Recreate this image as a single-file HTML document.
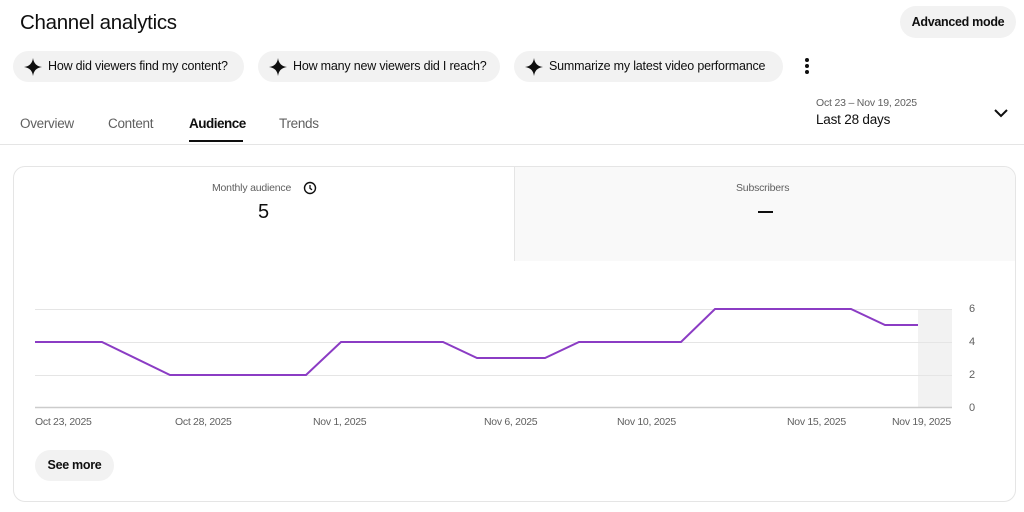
<!DOCTYPE html>
<html><head><style>
*{margin:0;padding:0;box-sizing:border-box}
body{width:1024px;height:512px;background:#fff;font-family:"Liberation Sans",sans-serif;color:#0f0f0f;position:relative;overflow:hidden}
.a{position:absolute;white-space:nowrap}
.chip{position:absolute;height:31px;top:51px;background:#f2f2f2;border-radius:16px;font-size:12.5px;letter-spacing:-0.2px;line-height:31px;padding-left:35px;white-space:nowrap}
.chip svg{position:absolute;left:11px;top:7px}
.tab{position:absolute;top:116px;font-size:13.5px;letter-spacing:-0.3px;color:#606060;white-space:nowrap}
.xl{position:absolute;top:416px;font-size:10.5px;letter-spacing:-0.3px;color:#606060;white-space:nowrap}
.yl{position:absolute;left:969px;font-size:11px;color:#606060}
</style></head><body>
<div class="a" style="left:20px;top:11px;font-size:20.5px;letter-spacing:-0.3px">Channel analytics</div>
<div class="a" style="left:900px;top:6px;width:116px;height:32px;background:#f2f2f2;border-radius:16px;font-size:12.5px;letter-spacing:-0.3px;line-height:32px;text-align:center;font-weight:bold">Advanced mode</div>

<div class="chip" style="left:13px;width:231px">How did viewers find my content?<svg width="18" height="18" viewBox="0 0 18 18"><path d="M9 0Q10 8 18 9Q10 10 9 18Q8 10 0 9Q8 8 9 0Z" fill="#0f0f0f"/></svg></div>
<div class="chip" style="left:258px;width:242px">How many new viewers did I reach?<svg width="18" height="18" viewBox="0 0 18 18"><path d="M9 0Q10 8 18 9Q10 10 9 18Q8 10 0 9Q8 8 9 0Z" fill="#0f0f0f"/></svg></div>
<div class="chip" style="left:514px;width:269px">Summarize my latest video performance<svg width="18" height="18" viewBox="0 0 18 18"><path d="M9 0Q10 8 18 9Q10 10 9 18Q8 10 0 9Q8 8 9 0Z" fill="#0f0f0f"/></svg></div>
<svg class="a" style="left:803px;top:57px" width="8" height="18"><circle cx="4" cy="3" r="2" fill="#0f0f0f"/><circle cx="4" cy="9" r="2" fill="#0f0f0f"/><circle cx="4" cy="15" r="2" fill="#0f0f0f"/></svg>

<div class="tab" style="left:20px">Overview</div>
<div class="tab" style="left:108px">Content</div>
<div class="tab" style="left:189px;color:#0f0f0f;font-weight:bold;letter-spacing:-0.5px">Audience</div>
<div class="a" style="left:189px;top:140px;width:54px;height:2px;background:#0f0f0f"></div>
<div class="tab" style="left:279px">Trends</div>
<div class="a" style="left:816px;top:97px;font-size:10.5px;letter-spacing:-0.2px;color:#606060">Oct 23 – Nov 19, 2025</div>
<div class="a" style="left:816px;top:112px;font-size:13.5px;letter-spacing:-0.2px">Last 28 days</div>
<svg class="a" style="left:994px;top:108px" width="14" height="10"><path d="M1 2L7 8L13 2" stroke="#0f0f0f" stroke-width="2" fill="none"/></svg>
<div class="a" style="left:0;top:144px;width:1024px;height:1px;background:#e5e5e5"></div>

<div class="a" style="left:13px;top:166px;width:1003px;height:336px;border:1px solid #e5e5e5;border-radius:12px;overflow:hidden">
 <div class="a" style="left:500px;top:0;width:502px;height:94px;background:#f9f9f9;border-left:1px solid #e5e5e5"></div>
 <div class="a" style="left:198px;top:15px;font-size:10.5px;letter-spacing:-0.2px;color:#606060">Monthly audience</div>
 <svg class="a" style="left:289px;top:14px" width="14" height="14"><circle cx="7" cy="7" r="5.5" stroke="#0f0f0f" stroke-width="1.4" fill="none"/><path d="M7 4V7.3L9 8.8" stroke="#0f0f0f" stroke-width="1.3" fill="none"/></svg>
 <div class="a" style="left:244px;top:34px;font-size:20px">5</div>
 <div class="a" style="left:722px;top:15px;font-size:10.5px;letter-spacing:-0.2px;color:#606060">Subscribers</div>
 <div class="a" style="left:744px;top:44px;width:15px;height:2px;background:#0f0f0f"></div>
</div>

<svg class="a" style="left:0;top:0" width="1024" height="512">
 <rect x="918" y="309" width="34" height="98" fill="#f2f2f2"/>
 <g stroke="#e5e5e5" stroke-width="1"><line x1="35" y1="309.5" x2="952" y2="309.5"/><line x1="35" y1="342.5" x2="952" y2="342.5"/><line x1="35" y1="375.5" x2="952" y2="375.5"/></g>
 <line x1="35" y1="407.5" x2="952" y2="407.5" stroke="#ccc" stroke-width="1.5"/>
 <polyline fill="none" stroke="#8b3cc4" stroke-width="2" points="35,342 102,342 170,375 306,375 341,342 443,342 477,358 545,358 579,342 681,342 715,309 851,309 885,325 918,325"/>
</svg>
<div class="yl" style="top:303px">6</div><div class="yl" style="top:336px">4</div><div class="yl" style="top:369px">2</div><div class="yl" style="top:402px">0</div>
<div class="xl" style="left:35px">Oct 23, 2025</div>
<div class="xl" style="left:175px">Oct 28, 2025</div>
<div class="xl" style="left:313px">Nov 1, 2025</div>
<div class="xl" style="left:484px">Nov 6, 2025</div>
<div class="xl" style="left:617px">Nov 10, 2025</div>
<div class="xl" style="left:787px">Nov 15, 2025</div>
<div class="xl" style="left:892px">Nov 19, 2025</div>
<div class="a" style="left:35px;top:450px;width:79px;height:31px;background:#f2f2f2;border-radius:16px;font-size:12.5px;letter-spacing:-0.3px;line-height:31px;text-align:center;font-weight:bold">See more</div>
</body></html>
